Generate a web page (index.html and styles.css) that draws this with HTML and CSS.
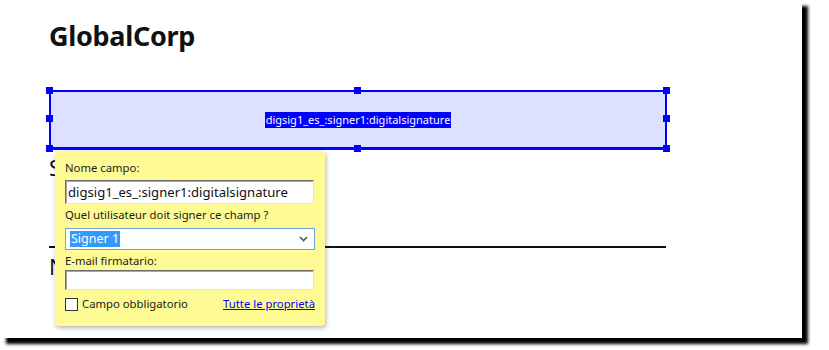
FILE: index.html
```html
<!DOCTYPE html>
<html>
<head>
<meta charset="utf-8">
<link rel="stylesheet" href="styles.css">
</head>
<body>
<div class="page">
  <h1 class="title">GlobalCorp</h1>
  <div class="sigfield">
    <div class="fieldbox">
      <span class="fieldname">digsig1_es_:signer1:digitalsignature</span>
      <span class="handle h-tl"></span>
      <span class="handle h-tc"></span>
      <span class="handle h-tr"></span>
      <span class="handle h-ml"></span>
      <span class="handle h-mr"></span>
      <span class="handle h-bl"></span>
      <span class="handle h-bc"></span>
      <span class="handle h-br"></span>
    </div>
  </div>
  <div class="doctext sig">S</div>
  <div class="rule"></div>
  <div class="doctext name">N</div>

  <div class="popup">
    <div class="plabel">Nome campo:</div>
    <div class="pinput filled">digsig1_es_:signer1:digitalsignature</div>
    <div class="plabel l2">Quel utilisateur doit signer ce champ ?</div>
    <div class="pselect">
      <span class="selval">Signer 1</span>
      <svg class="chev" width="9" height="6" viewBox="0 0 9 6"><path d="M1 1 L4.5 4.5 L8 1" fill="none" stroke="#555" stroke-width="1.6"/></svg>
    </div>
    <div class="plabel l3">E-mail firmatario:</div>
    <div class="pinput empty"></div>
    <div class="prow">
      <label class="check"><span class="box"></span>Campo obbligatorio</label>
      <a class="plink" href="#">Tutte le proprietà</a>
    </div>
  </div>
</div>
</body>
</html>
```

FILE: styles.css
```css
html, body {
  margin: 0;
  padding: 0;
  background: #fff;
}
body {
  height: 350px;
  overflow: hidden;
}
.page {
  position: relative;
  width: 802px;
  height: 338px;
  background: #fff;
  box-shadow: 6px 6px 3px #000;
  padding-left: 49px;
  box-sizing: border-box;
  font-family: "Noto Sans", "Open Sans", sans-serif;
  color: #111;
}
.title {
  margin: 0;
  padding-top: 17px;
  font-family: "Noto Sans", sans-serif;
  font-weight: 700;
  font-size: 27px;
  line-height: 38px;
  letter-spacing: -0.3px;
  color: #111;
}
.sigfield {
  margin-top: 35px;
  width: 618px;
  border-bottom: 1px solid #222;
}
.fieldbox {
  position: relative;
  height: 59px;
  box-sizing: border-box;
  border: 2px solid #0000ff;
  background: #dde0ff;
  display: flex;
  align-items: center;
  justify-content: center;
}
.fieldname {
  background: #0000ff;
  color: #fff;
  font-size: 11px;
  line-height: 16px;
  padding: 0 1px;
}
.handle {
  position: absolute;
  width: 7px;
  height: 7px;
  background: #0000ff;
}
.h-tl { left: -5px; top: -5px; }
.h-tc { left: 303px; top: -5px; }
.h-tr { right: -5px; top: -5px; }
.h-ml { left: -5px; top: 23px; }
.h-mr { right: -5px; top: 23px; }
.h-bl { left: -5px; bottom: -5px; }
.h-bc { left: 303px; bottom: -5px; }
.h-br { right: -5px; bottom: -5px; }

.doctext {
  font-size: 22px;
  line-height: 30px;
  color: #111;
}
.sig { margin-top: 2px; }
.rule {
  margin-top: 64px;
  width: 617px;
  height: 2px;
  background: #111;
}
.name { margin-top: 3px; }

.popup {
  position: absolute;
  left: 55px;
  top: 151px;
  width: 270px;
  height: 175px;
  box-sizing: border-box;
  padding: 9px 10px 0 10px;
  background: #fffb94;
  border-radius: 4px;
  box-shadow: 1px 2px 5px rgba(0, 0, 0, 0.3);
  font-size: 11.3px;
  line-height: 16px;
  color: #1a1a1a;
}
.plabel { height: 16px; }
.pinput {
  box-sizing: border-box;
  width: 249px;
  background: #fff;
  border: 1px solid;
  border-color: #6b6b6b #e0e0e0 #e0e0e0 #6b6b6b;
  box-shadow: inset 1px 1px 0 #a8a8a8;
}
.pinput.filled {
  margin-top: 4px;
  height: 24px;
  font-size: 13.1px;
  line-height: 22px;
  padding-left: 2px;
  color: #111;
}
.l2 { margin-top: 3px; }
.pselect {
  margin-top: 5px;
  box-sizing: border-box;
  width: 250px;
  height: 22px;
  background: #fff;
  border: 1px solid #6ea2e6;
  display: flex;
  align-items: center;
  justify-content: space-between;
  padding: 0 6px 0 4px;
}
.selval {
  background: #3399ff;
  color: #fff;
  font-size: 12.5px;
  line-height: 16px;
  padding: 0 1px;
}
.chev { display: block; }
.l3 { margin-top: 3px; }
.pinput.empty {
  margin-top: 1px;
  height: 20px;
}
.prow {
  margin-top: 6px;
  width: 250px;
  display: flex;
  justify-content: space-between;
  align-items: center;
}
.check {
  display: flex;
  align-items: center;
  gap: 4px;
}
.box {
  width: 13px;
  height: 13px;
  box-sizing: border-box;
  border: 1px solid #333;
  background: #fff;
}
.plink {
  color: #0000ee;
  text-decoration: underline;
}
```
